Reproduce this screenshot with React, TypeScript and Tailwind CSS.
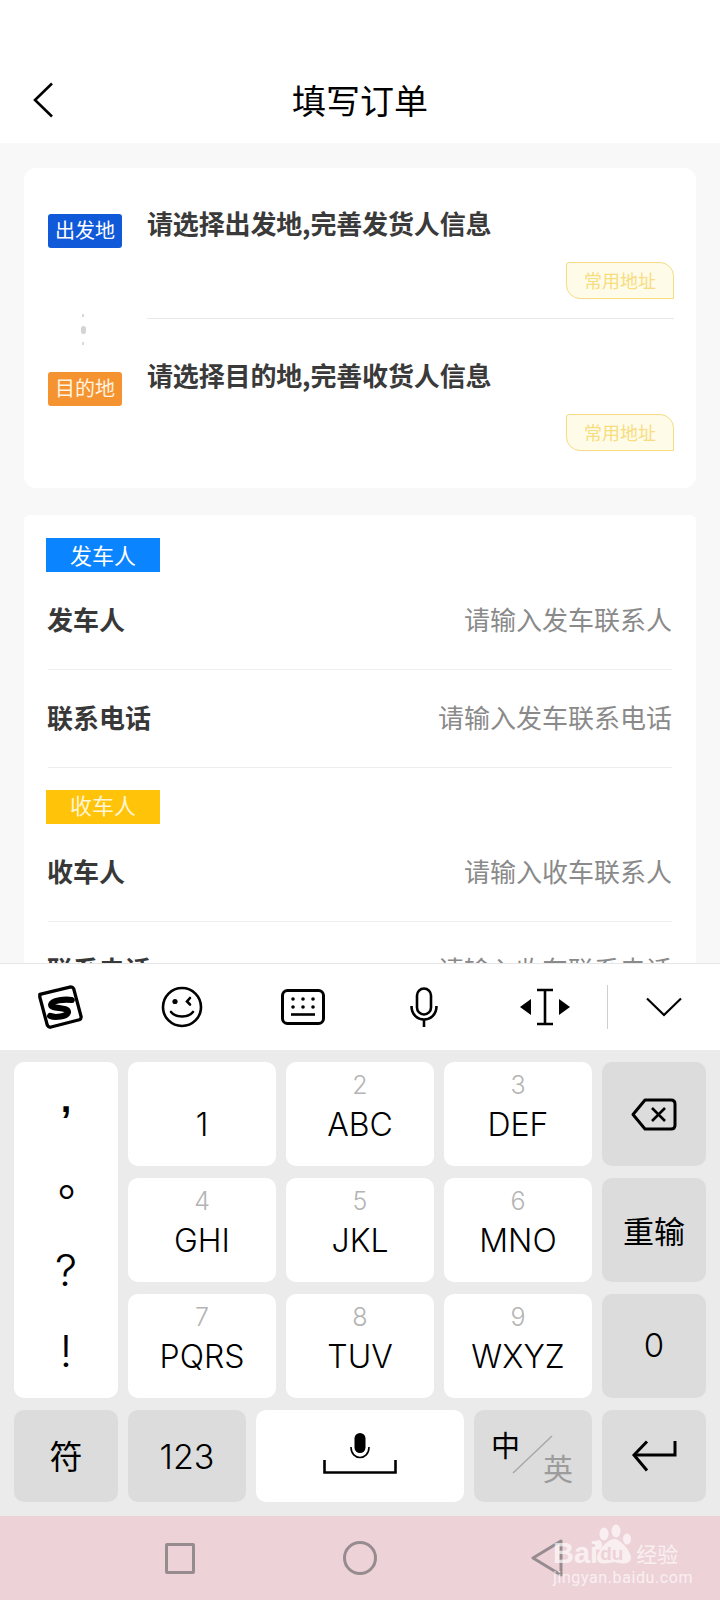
const digitKeys = [
  { digit: "", letters: "1" },
  { digit: "2", letters: "ABC" },
  { digit: "3", letters: "DEF" },
  { digit: "4", letters: "GHI" },
  { digit: "5", letters: "JKL" },
  { digit: "6", letters: "MNO" },
  { digit: "7", letters: "PQRS" },
  { digit: "8", letters: "TUV" },
  { digit: "9", letters: "WXYZ" },
]

function AddressButton() {
  return (
    <div className="flex justify-end mt-[23px]">
      <div className="flex h-[37px] w-[108px] items-center justify-center rounded-tr-[14px] rounded-bl-[14px] rounded-tl-[3px] border border-[#f5dc85] bg-[#fffbe9] pb-[2px] text-[18px] leading-none text-[#f6dd80]">
        常用地址
      </div>
    </div>
  )
}

function FormRow({ label, placeholder }: { label: string; placeholder: string }) {
  return (
    <div className="mx-[24px] flex h-[98px] shrink-0 items-center justify-between border-b border-[#eeeeee] pb-[4px]">
      <span className="-ml-[1px] text-[26px] font-bold text-[#383838]">{label}</span>
      <span className="text-[26px] text-[#8a8a8a]">{placeholder}</span>
    </div>
  )
}

function SectionTag({ text, color }: { text: string; color: string }) {
  return (
    <div className={`ml-[22px] flex h-[34px] w-[114px] shrink-0 items-center justify-center text-[22px] leading-none ${color}`}>
      {text}
    </div>
  )
}

function DigitKey({ digit, letters }: { digit: string; letters: string }) {
  return (
    <div className="flex h-[104px] flex-col items-center rounded-[10px] bg-white pt-[9px] font-['Inter',sans-serif] font-light text-black">
      <span className="h-[28px] text-[25px] leading-[28px] text-[#b4b4b4]">{digit}</span>
      <span className="mt-[6px] text-[32px] leading-[40px]">{letters}</span>
    </div>
  )
}

function SideKey({ children }: { children: React.ReactNode }) {
  return (
    <div className="flex h-[104px] items-center justify-center rounded-[10px] bg-[#dcdcdc] text-[31px] text-black">
      {children}
    </div>
  )
}

function Toolbar() {
  return (
    <div className="flex h-[87px] shrink-0 items-center border-t border-[#e6e6e6] bg-white">
      <div className="flex w-[121px] justify-center">
        <svg width="47" height="47" viewBox="0 0 50 50" fill="none" stroke="#000">
          <path d="M3 11 L36 3 Q38 3 39 5 L47 35 Q47 37 45 38 L14 46 Q12 46 11 44 L3 14 Z" strokeWidth="3.5" strokeLinejoin="round" />
          <path d="M37 17 C30 16 16 17 15 22 C15 27 33 24 33 30 C32 35 19 36 14 34" strokeWidth="6.5" strokeLinecap="round" />
        </svg>
      </div>
      <div className="flex w-[121px] justify-center">
        <svg width="42" height="42" viewBox="0 0 42 42" fill="none" stroke="#000" strokeWidth="2.6" strokeLinecap="round">
          <circle cx="21" cy="21" r="19" />
          <circle cx="14" cy="15.5" r="2.6" fill="#000" stroke="none" />
          <path d="M29 12 L26 15.5 L29 18.5" />
          <path d="M10 26 C15 32 27 32 32 26" />
        </svg>
      </div>
      <div className="flex w-[121px] justify-center">
        <svg width="44" height="36" viewBox="0 0 44 36" fill="#000" stroke="#000">
          <rect x="1.5" y="1.5" width="41" height="33" rx="5" strokeWidth="3" fill="none" />
          <circle cx="12" cy="10" r="1.8" stroke="none" />
          <circle cx="22" cy="10" r="1.8" stroke="none" />
          <circle cx="32" cy="10" r="1.8" stroke="none" />
          <circle cx="12" cy="18" r="1.8" stroke="none" />
          <circle cx="22" cy="18" r="1.8" stroke="none" />
          <circle cx="32" cy="18" r="1.8" stroke="none" />
          <path d="M10 25.5h24" strokeWidth="2.6" />
        </svg>
      </div>
      <div className="flex w-[121px] justify-center">
        <svg width="28" height="40" viewBox="0 0 28 40" fill="none" stroke="#000" strokeWidth="2.6">
          <rect x="7" y="1.5" width="14" height="26" rx="7" />
          <path d="M1.5 19 C1.5 37 26.5 37 26.5 19" />
          <path d="M14 32v8" />
        </svg>
      </div>
      <div className="flex w-[121px] justify-center">
        <svg width="52" height="38" viewBox="0 0 52 38" fill="#000" stroke="none">
          <path d="M12 11 L1 19 L12 27 Z" />
          <path d="M40 11 L51 19 L40 27 Z" />
          <path d="M18 2h16M18 36h16M26 2v34" stroke="#000" strokeWidth="2.6" fill="none" />
        </svg>
      </div>
      <div className="ml-[2px] h-[44px] w-[1px] bg-[#cfcfcf]" />
      <div className="flex flex-1 justify-center">
        <svg width="36" height="20" viewBox="0 0 36 20" fill="none" stroke="#000" strokeWidth="2.2">
          <path d="M1 1.5 L18 18 L35 1.5" />
        </svg>
      </div>
    </div>
  )
}

function Keyboard() {
  return (
    <div className="flex flex-1 flex-col gap-[12px] bg-[#ebebeb] px-[14px] pt-[12px]">
      <div className="grid grid-cols-[104px_148px_148px_148px_104px] grid-rows-[104px_104px_104px] gap-x-[10px] gap-y-[12px]">
        <div className="row-span-3 flex flex-col items-center rounded-[10px] bg-white text-black">
          <span className="mt-[12px] h-[50px] font-['Liberation_Sans',sans-serif] text-[38px] font-bold leading-[50px]">,</span>
          <span className="ml-[28px] mt-[28px] h-[50px] text-[44px] leading-[50px]">。</span>
          <span className="mt-[38px] h-[60px] font-['Inter',sans-serif] text-[44px] font-light leading-[60px]">?</span>
          <span className="mt-[21px] h-[60px] font-['Inter',sans-serif] text-[44px] font-light leading-[60px]">!</span>
        </div>
        <DigitKey {...digitKeys[0]} />
        <DigitKey {...digitKeys[1]} />
        <DigitKey {...digitKeys[2]} />
        <SideKey>
          <svg width="46" height="33" viewBox="0 0 46 33" fill="none" stroke="#000" strokeWidth="3" strokeLinejoin="round">
            <path d="M14 2 H40 Q44 2 44 6 V27 Q44 31 40 31 H14 L2 16.5 Z" />
            <path d="M21 10 L34 23 M34 10 L21 23" strokeWidth="2.6" />
          </svg>
        </SideKey>
        <DigitKey {...digitKeys[3]} />
        <DigitKey {...digitKeys[4]} />
        <DigitKey {...digitKeys[5]} />
        <SideKey>重输</SideKey>
        <DigitKey {...digitKeys[6]} />
        <DigitKey {...digitKeys[7]} />
        <DigitKey {...digitKeys[8]} />
        <SideKey>
          <span className="font-['Inter',sans-serif] text-[33px] font-light">0</span>
        </SideKey>
      </div>
      <div className="flex h-[92px] gap-[10px]">
        <div className="flex w-[104px] items-center justify-center rounded-[10px] bg-[#dcdcdc] text-[33px] text-black">符</div>
        <div className="flex w-[118px] items-center justify-center rounded-[10px] bg-[#dcdcdc] font-['Inter',sans-serif] text-[34px] font-light text-black">123</div>
        <div className="flex w-[208px] items-center justify-center rounded-[10px] bg-white">
          <svg width="74" height="50" viewBox="0 0 74 50" fill="none" stroke="#000">
            <rect x="31.5" y="2" width="11" height="20" rx="5.5" fill="#000" stroke="none" />
            <path d="M28 16 C28 30 46 30 46 16" strokeWidth="1.6" />
            <path d="M1.5 29 V41.5 H72.5 V29" strokeWidth="2.6" />
          </svg>
        </div>
        <div className="relative flex w-[118px] items-start rounded-[10px] bg-[#dcdcdc] pl-[17px]">
          <span className="mt-[19px] text-[29px] leading-[30px] text-black">中</span>
          <span className="ml-[23px] mt-[42px] text-[30px] leading-[30px] text-[#9c9c9c]">英</span>
          <svg className="absolute left-[38px] top-[25px]" width="42" height="39" viewBox="0 0 42 39" fill="none" stroke="#a8a8a8" strokeWidth="1.5">
            <path d="M40 1 L1 38" />
          </svg>
        </div>
        <div className="flex w-[104px] items-center justify-center rounded-[10px] bg-[#dcdcdc]">
          <svg width="46" height="32" viewBox="0 0 46 32" fill="none" stroke="#000" strokeWidth="3">
            <path d="M44 1 V15 H3" />
            <path d="M16 1.5 L3 15 L16 30.5" />
          </svg>
        </div>
      </div>
    </div>
  )
}

function NavBar() {
  return (
    <div className="relative flex h-[84px] shrink-0 items-center bg-[#edd2d8] pl-[90px]">
      <div className="flex w-[180px] justify-center">
        <div className="h-[31px] w-[30px] rounded-[2px] border-[3px] border-[#968c90]" />
      </div>
      <div className="flex w-[180px] justify-center">
        <div className="h-[34px] w-[34px] rounded-full border-[3px] border-[#968c90]" />
      </div>
      <div className="flex w-[180px] justify-center pl-[14px]">
        <svg width="32" height="38" viewBox="0 0 32 38" fill="none" stroke="#968c90" strokeWidth="3" strokeLinejoin="round">
          <path d="M30 2 L2 19 L30 36 Z" />
        </svg>
      </div>
      {/* watermark sits over the back button */}
      <div className="absolute left-[553px] top-[6px] w-[128px] text-white/65">
        <div className="flex h-[44px] items-end">
          <span className="-mb-[3px] font-['Liberation_Sans',sans-serif] text-[29px] font-bold leading-[32px]">Bai</span>
          <div className="relative -ml-[4px] h-[42px] w-[40px]">
            <svg width="40" height="42" viewBox="0 0 40 42" fill="currentColor">
              <ellipse cx="10" cy="10" rx="4.5" ry="6.5" />
              <ellipse cx="22" cy="7" rx="4.5" ry="6.5" />
              <ellipse cx="33" cy="15" rx="4" ry="5.5" />
              <ellipse cx="4.5" cy="21" rx="3.5" ry="5" />
              <path d="M20 15 C27 15 38 29 37 34 C36 41 27 40 20 38 C12 40 3 41 3 34 C3 28 13 15 20 15 Z" />
            </svg>
            <span className="absolute left-[6px] top-[20px] font-['Liberation_Sans',sans-serif] text-[19px] font-bold leading-[20px] text-[#edd2d8]">du</span>
          </div>
          <span className="mb-[1px] ml-[2px] text-[21px] leading-[24px]">经验</span>
        </div>
        <div className="mt-[3px] whitespace-nowrap font-['Roboto',sans-serif] text-[16px] leading-[18px] tracking-[0.6px]">jingyan.baidu.com</div>
      </div>
    </div>
  )
}

export default function App() {
  return (
    <div className="flex h-[1600px] w-[720px] flex-col overflow-hidden bg-[#f8f8f8] font-['Noto_Sans_CJK_SC',sans-serif]">
      <div className="flex-1 overflow-hidden">
        <header className="grid h-[143px] grid-cols-[1fr_auto_1fr] items-center bg-white pt-[56px]">
          <svg className="ml-[32px]" width="22" height="36" viewBox="0 0 22 36" fill="none" stroke="#000" strokeWidth="2.6">
            <path d="M20 1.5 L3 18 L20 34.5" />
          </svg>
          <h1 className="text-[34px] leading-none text-black">填写订单</h1>
          <div />
        </header>

        <section className="mx-[24px] mt-[25px] flex h-[320px] rounded-[12px] bg-white pl-[24px] pr-[22px]">
          <div className="flex w-[74px] shrink-0 flex-col items-center pt-[46px]">
            <div className="flex h-[34px] w-[74px] items-center justify-center rounded-[3px] bg-[#1059d9] pb-[2px] text-[20px] leading-none text-white">出发地</div>
            <div className="mr-[4px] mt-[66px] h-[3px] w-[2px] bg-[#d9d9d9]" />
            <div className="mr-[4px] mt-[9px] h-[8px] w-[5px] rounded-full bg-[#d4d4d4]" />
            <div className="mr-[4px] mt-[8px] h-[3px] w-[2px] bg-[#d9d9d9]" />
            <div className="mt-[27px] flex h-[34px] w-[74px] items-center justify-center rounded-[3px] bg-[#f59331] pb-[2px] text-[20px] leading-none text-[#fff3e0]">目的地</div>
          </div>
          <div className="ml-[25px] flex-1">
            <div className="border-b border-[#e8e8e8] pb-[19px] pt-[39px]">
              <div className="text-[26px] font-bold leading-[32px] tracking-[-0.15px] text-[#3a3a3a]">请选择出发地,完善发货人信息</div>
              <AddressButton />
            </div>
            <div className="pt-[40px]">
              <div className="text-[26px] font-bold leading-[32px] tracking-[-0.15px] text-[#3a3a3a]">请选择目的地,完善收货人信息</div>
              <AddressButton />
            </div>
          </div>
        </section>

        <section className="mx-[24px] mt-[27px] flex h-[480px] flex-col rounded-t-[6px] bg-white pt-[23px]">
          <SectionTag text="发车人" color="bg-[#0a84ff] pb-[3px] text-white" />
          <FormRow label="发车人" placeholder="请输入发车联系人" />
          <FormRow label="联系电话" placeholder="请输入发车联系电话" />
          <div className="mt-[22px]">
            <SectionTag text="收车人" color="bg-[#ffc40a] pb-[6px] text-[#fff6d8]" />
          </div>
          <FormRow label="收车人" placeholder="请输入收车联系人" />
          <FormRow label="联系电话" placeholder="请输入收车联系电话" />
        </section>
      </div>

      <div className="flex h-[637px] shrink-0 flex-col">
        <Toolbar />
        <Keyboard />
        <NavBar />
      </div>
    </div>
  )
}
